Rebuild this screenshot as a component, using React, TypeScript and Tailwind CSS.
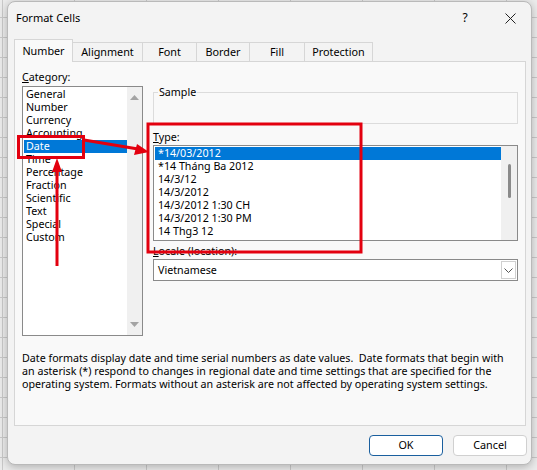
import React from "react";

const FONT = "font-['Noto_Sans','Liberation_Sans',sans-serif]";

const categories = [
  "General",
  "Number",
  "Currency",
  "Accounting",
  "Date",
  "Time",
  "Percentage",
  "Fraction",
  "Scientific",
  "Text",
  "Special",
  "Custom",
];

const types = [
  "*14/03/2012",
  "*14 Tháng Ba 2012",
  "14/3/12",
  "14/3/2012",
  "14/3/2012 1:30 CH",
  "14/3/2012 1:30 PM",
  "14 Thg3 12",
];

const tabs = [
  { label: "Number", w: "w-[59px]" },
  { label: "Alignment", w: "w-[70px]" },
  { label: "Font", w: "w-[54px]" },
  { label: "Border", w: "w-[53px]" },
  { label: "Fill", w: "w-[55px]" },
  { label: "Protection", w: "w-[68px]" },
];

function Annotations() {
  return (
    <svg
      className="absolute left-0 top-0 pointer-events-none"
      width="537"
      height="470"
      viewBox="0 0 537 470"
    >
      {/* box round Date */}
      <rect x="18.5" y="136.5" width="65" height="21" fill="none" stroke="#e3000f" strokeWidth="3" />
      {/* box round Type list */}
      <rect x="148" y="124" width="213" height="128" fill="none" stroke="#e3000f" strokeWidth="3" />
      {/* arrow to Type */}
      <line x1="84" y1="140" x2="138" y2="149" stroke="#e3000f" strokeWidth="3" />
      <polygon points="149,152 134,155 137,144" fill="#e3000f" />
      {/* arrow up to Date */}
      <line x1="57" y1="266" x2="57" y2="170" stroke="#e3000f" strokeWidth="3" />
      <polygon points="57,158 52,172 62,172" fill="#e3000f" />
    </svg>
  );
}

export default function App() {
  return (
    <div
      className={`relative w-[537px] h-[470px] overflow-hidden bg-[#ebebeb] bg-[linear-gradient(to_right,#c9c9c9_1px,transparent_1px),linear-gradient(to_bottom,#c9c9c9_1px,transparent_1px)] bg-[size:72px_20px] bg-[position:2px_-3px] pt-[1px] pl-[7px] text-black ${FONT}`}
    >
      <div className="w-[525px] h-[464px] rounded-[8px] border border-[#b9b9b9] bg-[#f3f3f3] shadow-[0_2px_8px_rgba(0,0,0,0.25)] flex flex-col">
        {/* TITLE BAR */}
        <div className="h-[32px] flex items-center pl-[8px] shrink-0">
          <span className="text-[11px]">Format Cells</span>
          <div className="ml-auto flex items-center gap-[15px] pr-[6px]">
            <span className="w-[30px] text-center text-[12px]">?</span>
            <span className="w-[30px] flex justify-center">
              <svg width="11" height="11" viewBox="0 0 11 11">
                <path d="M0.5 0.5 L10.5 10.5 M10.5 0.5 L0.5 10.5" stroke="#222" strokeWidth="1" />
              </svg>
            </span>
          </div>
        </div>

        {/* TABS */}
        <div className="flex items-end pl-[6px] h-[27px] shrink-0 relative z-10">
          {tabs.map((t, i) =>
            i === 0 ? (
              <div
                key={t.label}
                className={`${t.w} h-[23px] border border-b-0 border-[#d6d6d6] bg-[#f9f9f9] text-[10.8px] flex items-center justify-center -mb-[1px]`}
              >
                {t.label}
              </div>
            ) : (
              <div
                key={t.label}
                className={`${t.w} h-[19px] border border-l-0 border-b-0 border-[#d6d6d6] bg-[#f3f3f3] text-[10.8px] flex items-center justify-center`}
              >
                {t.label}
              </div>
            )
          )}
        </div>

        {/* PANEL */}
        <div className="mx-[6px] w-[512px] h-[365px] border border-[#d6d6d6] bg-[#f9f9f9] shrink-0 flex flex-col pl-[7px] pt-[8px] text-[10.7px]">
          <div className="flex">
            {/* Category */}
            <div className="w-[121px] flex flex-col">
              <div className="h-[16px] leading-[14px]">
                <span className="underline">C</span>ategory:
              </div>
              <div className="h-[250px] border border-[#8a8a8a] bg-white flex">
                <div className="flex-1 pt-[1px] pl-[1px] leading-[13px]">
                  {categories.map((c) => (
                    <div
                      key={c}
                      className={c === "Date" ? "bg-[#0078d7] text-white pl-[2px]" : "pl-[2px]"}
                    >
                      {c}
                    </div>
                  ))}
                </div>
                <div className="w-[15px] bg-[#f0f0f0] flex flex-col items-center justify-between py-[8px]">
                  <svg width="9" height="5" viewBox="0 0 9 5">
                    <polygon points="0,5 9,5 4.5,0" fill="#a3a3a3" />
                  </svg>
                  <svg width="9" height="5" viewBox="0 0 9 5">
                    <polygon points="0,0 9,0 4.5,5" fill="#a3a3a3" />
                  </svg>
                </div>
              </div>
            </div>

            {/* Right column */}
            <div className="ml-[10px] w-[365px] flex flex-col">
              <fieldset className="mt-[15px] h-[39px] border border-[#dcdcdc] px-[4px]">
                <legend className="px-[1px] leading-[14px]">Sample</legend>
              </fieldset>

              <div className="mt-[6px] h-[15px] leading-[14px]">
                <span className="underline">T</span>ype:
              </div>
              <div className="h-[96px] border border-[#8a8a8a] bg-white flex">
                <div className="flex-1 pt-[1px] pl-[1px] leading-[13px]">
                  {types.map((t, i) => (
                    <div
                      key={t}
                      className={i === 0 ? "bg-[#0078d7] text-white pl-[3px]" : "pl-[3px]"}
                    >
                      {t}
                    </div>
                  ))}
                </div>
                <div className="w-[16px] bg-[#f0f0f0] flex justify-center pt-[18px]">
                  <div className="w-[3px] h-[34px] rounded-full bg-[#8a8a8a]" />
                </div>
              </div>

              <div className="mt-[3px] h-[15px] leading-[14px]">
                <span className="underline">L</span>ocale (location):
              </div>
              <div className="h-[22px] border border-[#8a8a8a] bg-white flex items-center pl-[4px]">
                <span>Vietnamese</span>
                <div className="ml-auto mr-[1px] w-[15px] h-[18px] border border-[#d0d0d0] bg-white flex items-center justify-center">
                  <svg width="9" height="5" viewBox="0 0 9 5">
                    <path d="M0.5 0.5 L4.5 4.5 L8.5 0.5" fill="none" stroke="#555" strokeWidth="1" />
                  </svg>
                </div>
              </div>
            </div>
          </div>

          <p className="mt-[16px] leading-[13px] whitespace-nowrap">
            Date formats display date and time serial numbers as date values.&nbsp; Date formats that begin with
            <br />
            an asterisk (*) respond to changes in regional date and time settings that are specified for the
            <br />
            operating system. Formats without an asterisk are not affected by operating system settings.
          </p>
        </div>

        {/* BUTTONS */}
        <div className="flex justify-end gap-[10px] pr-[4px] mt-[9px]">
          <button className="w-[74px] h-[21px] rounded-[4px] border border-[#1a5f9e] bg-white text-[10.8px]">
            OK
          </button>
          <button className="w-[74px] h-[21px] rounded-[4px] border border-[#d0d0d0] bg-white text-[10.8px]">
            Cancel
          </button>
        </div>
      </div>

      <Annotations />
    </div>
  );
}
